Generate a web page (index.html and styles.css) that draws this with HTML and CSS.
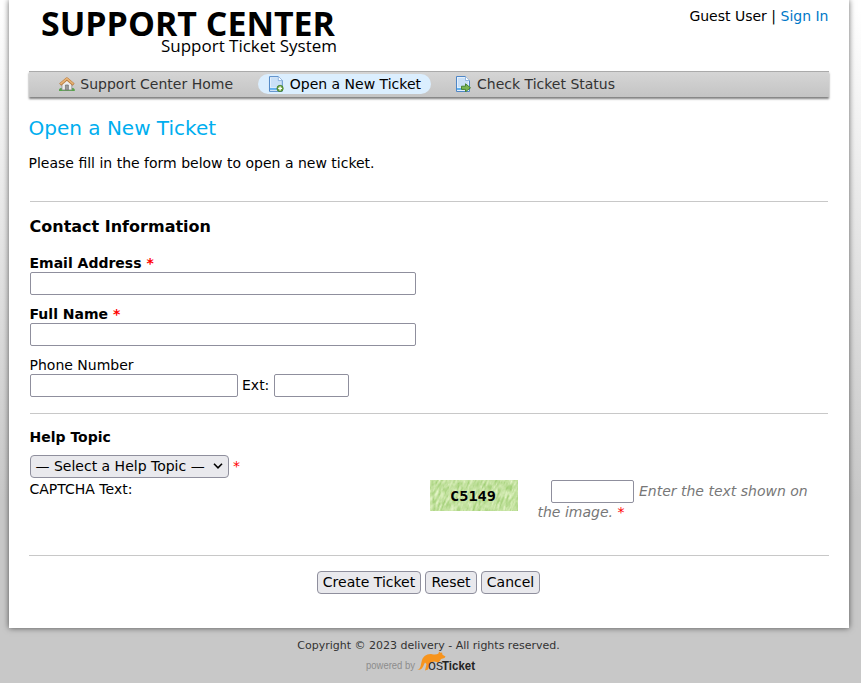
FILE: index.html
```html
<!DOCTYPE html>
<html lang="en">
<head>
<meta charset="utf-8">
<title>Support Center</title>
<link rel="stylesheet" href="styles.css">
</head>
<body>
<div class="container">
  <header class="header">
    <svg class="logo" width="300" height="60" viewBox="0 0 300 60" role="img" aria-label="Support Center">
      <text class="logo-title" x="0" y="35.500" textLength="294" lengthAdjust="spacingAndGlyphs">SUPPORT CENTER</text>
      <text class="logo-sub" x="120" y="52" textLength="176" lengthAdjust="spacingAndGlyphs">Support Ticket System</text>
    </svg>
    <p class="user">Guest User | <a href="#">Sign In</a></p>
  </header>
  <nav class="nav">
    <a class="nav-item home" href="#">
      <svg width="16" height="16" viewBox="0 0 16 16"><path d="M0 13.5 Q2 11 4 13 H12 Q14 11 16 13.5 V15 H0Z" fill="#58a44c"/><path d="M3 7.5 8 3 13 7.5V14H3Z" fill="#ececec" stroke="#8b8b8b" stroke-width=".8"/><path d="M6.5 14V9h3v5Z" fill="#9b9b9b" stroke="#6e6e6e" stroke-width=".7"/><path d="M1.2 8.7 8 2.7l6.8 6" fill="none" stroke="#b5773a" stroke-width="3" stroke-linejoin="round"/><path d="M1.5 8.2 8 2.5 14.5 8.2" fill="none" stroke="#e7b376" stroke-width="1.7"/></svg>
      <span>Support Center Home</span></a>
    <a class="nav-item new active" href="#">
      <svg width="16" height="16" viewBox="0 0 16 16"><path d="M1.5.5h9l4 4v11h-13Z" fill="#e4f0fc" stroke="#4f86c6"/><path d="M3 2h7l3 3v6H3Z" fill="#c9e0f7"/><path d="M10.5.5v4h4" fill="#fff" stroke="#7ba8db" stroke-width=".8"/><path d="M2 13h8" stroke="#62b1ee" stroke-width="2"/><circle cx="12.300" cy="12.500" r="3.200" fill="#6da544" stroke="#3f7c26" stroke-width=".8"/><path d="M12.300 10.500v4M10.300 12.500h4" stroke="#fff" stroke-width="1.400"/></svg>
      <span>Open a New Ticket</span></a>
    <a class="nav-item status" href="#">
      <svg width="16" height="16" viewBox="0 0 16 16"><path d="M1.5.5h9l4 4v11h-13Z" fill="#e4f0fc" stroke="#4f86c6"/><path d="M3 2h7l3 3v6H3Z" fill="#c9e0f7"/><path d="M10.5.5v4h4" fill="#fff" stroke="#7ba8db" stroke-width=".8"/><path d="M2 13h7" stroke="#62b1ee" stroke-width="2"/><path d="M6.5 10.2h4V7.8l5 4-5 4v-2.4h-4Z" fill="#79b552" stroke="#3f7c26" stroke-width=".9"/></svg>
      <span>Check Ticket Status</span></a>
  </nav>
  <main class="content">
    <h1>Open a New Ticket</h1>
    <p class="intro">Please fill in the form below to open a new ticket.</p>
    <form>
      <section class="contact">
        <h3>Contact Information</h3>
        <div class="field"><label class="required" for="email">Email Address <span class="error">*</span></label><input id="email" class="wide" type="text"></div>
        <div class="field"><label class="required" for="name">Full Name <span class="error">*</span></label><input id="name" class="wide" type="text"></div>
        <div class="field"><label for="phone">Phone Number</label>
          <div class="phone-row"><input id="phone" class="phone" type="text"><span class="ext-label">Ext:</span><input class="ext" type="text" aria-label="Extension"></div>
        </div>
      </section>
      <section class="topic">
        <h4>Help Topic</h4>
        <div class="topic-row">
          <div class="select"><span>— Select a Help Topic —</span><svg width="10" height="6" viewBox="0 0 10 6"><path d="M1 .8l4 4 4-4" fill="none" stroke="#000" stroke-width="1.6"/></svg></div>
          <span class="error">*</span>
        </div>
        <div class="captcha-row">
          <span class="captcha-label">CAPTCHA Text:</span>
          <svg class="captcha" width="88" height="31" viewBox="0 0 88 31">
            <defs><filter id="grass" x="0" y="0" width="100%" height="100%" color-interpolation-filters="sRGB"><feTurbulence type="fractalNoise" baseFrequency=".5 .13" numOctaves="3" seed="4"/><feColorMatrix values=".45 0 0 0 .54  .25 0 0 0 .76  .55 0 0 0 .35  0 0 0 0 1"/></filter></defs>
            <rect width="88" height="31" fill="#c0de9b"/>
            <g transform="rotate(20 44 15)"><rect x="-15" y="-25" width="120" height="80" filter="url(#grass)"/></g>
            <text class="captcha-code" x="20" y="20.500" textLength="46" lengthAdjust="spacingAndGlyphs">C5149</text>
          </svg>
          <div class="captcha-entry"><input class="code" type="text" aria-label="CAPTCHA Text"> <em>Enter the text shown on the image.</em> <span class="error">*</span></div>
        </div>
      </section>
      <div class="buttons"><button type="submit" class="create">Create Ticket</button><button type="reset" class="reset">Reset</button><button type="button" class="cancel">Cancel</button></div>
    </form>
  </main>
</div>
<footer class="footer">
  <p>Copyright © 2023 delivery - All rights reserved.</p>
  <svg class="powered" width="120" height="22" viewBox="0 0 120 22" role="img" aria-label="powered by osTicket">
    <text class="powered-by" x="1" y="17.500" textLength="49" lengthAdjust="spacingAndGlyphs">powered by</text>
    <path d="M52 19C55.500 18.500 55.500 15 56.500 11C57.500 5.500 62 2.500 67 3.200C70 3.600 72 3.500 73.500 2.500L74 .5l2 1.500 1-.8.5 2.500 3 1.800-1 1.500-3.500 1C75 10.500 74 11.500 71.500 11L69 10.500C66 11 65.500 13 63.500 15.500L63 18.500 60 19.500 61.500 13 60 11.500C58 14.500 58 19.500 52 19Z" fill="#f7941d"/>
    <text class="brand-os" x="63" y="19" textLength="15" lengthAdjust="spacingAndGlyphs">os</text>
    <text class="brand-ticket" x="77" y="19" textLength="33" lengthAdjust="spacingAndGlyphs">Ticket</text>
  </svg>
</footer>
</body>
</html>
```
FILE: styles.css
```css
* { box-sizing: border-box; }
body {
  margin: 0;
  min-height: 683px;
  background: #c8c8c8 linear-gradient(#fff 0, #fff 10px, #c8c8c8 500px) no-repeat;
  font: 14px/20px "DejaVu Sans", sans-serif;
  color: #000;
  overflow: hidden;
}
h1, h3, h4, p { margin: 0; }
a { color: #0072bc; text-decoration: none; }
.container {
  width: 840px;
  height: 628px;
  margin-left: 9px;
  padding: 0 20px;
  background: #fff;
  box-shadow: 0 0 6px rgba(0, 0, 0, .6);
}
.header {
  display: flex;
  justify-content: space-between;
  height: 71px;
  padding-left: 12px;
}
.logo { display: block; overflow: visible; }
.logo-title { font: bold 33.5px "Open Sans", sans-serif; }
.logo-sub { font: 16px "Open Sans", sans-serif; }
.user { padding: 6px .5px 0 0; }
.user a { color: #0078c8; }
.nav {
  display: flex;
  align-items: flex-start;
  height: 26px;
  padding: 2px 0 0 20px;
  border-top: 1px solid #aaa;
  background: linear-gradient(#d5d5d5, #c4c4c4);
  box-shadow: 0 2px 2px rgba(0, 0, 0, .5);
}
.nav-item {
  display: flex;
  align-items: center;
  gap: 5.5px;
  height: 20px;
  padding: 0 10px;
  border-radius: 10px;
  color: #333;
  white-space: nowrap;
}
.home { width: 194px; margin-right: 15px; }
.new { width: 173px; margin-right: 14px; }
.new, .status { gap: 6px; }
.active { background: #dbeefe; color: #000; }
.content { padding-top: 19px; }
h1 {
  margin-left: -.5px;
  font-size: 20px;
  font-weight: normal;
  line-height: 24px;
  color: #00aeef;
}
.intro { margin: 13px 0 0 -.5px; }
.contact {
  height: 212px;
  margin: 28px 1px 0;
  padding-top: 14px;
  border-top: 1px solid #c8c8c8;
}
h3 { font-size: 16px; line-height: 22px; margin: 0 0 16px -.5px; }
.field { height: 51px; }
label { display: block; height: 18px; margin-left: -.5px; line-height: 18px; }
.required { font-weight: bold; }
.error { color: #f00; font-weight: normal; }
input {
  display: block;
  height: 23px;
  padding: 1px 2px;
  border: 1px solid #8f8f9d;
  border-radius: 2px;
  background: #fff;
  font: inherit;
}
.required .error { font-weight: bold; }
.wide { width: 386px; }
.phone-row { display: flex; align-items: flex-start; }
.phone { width: 208px; }
.ext-label { width: 36px; padding: 1px 0 0 4px; }
.ext { width: 75px; }
.topic {
  height: 142px;
  margin: 0 1px;
  padding-top: 13px;
  border-top: 1px solid #c8c8c8;
}
h4 { margin-left: -.5px; font-size: 14px; line-height: 20px; }
.topic-row { display: flex; align-items: flex-start; gap: 4px; height: 23px; margin-top: 8px; }
.topic-row .error { padding-top: 1px; }
.select {
  display: flex;
  align-items: center;
  justify-content: space-between;
  width: 199px;
  height: 23px;
  padding: 0 5px 1px 4.5px;
  border: 1px solid #8f8f9d;
  border-radius: 4px;
  background: #e9e9ed;
  white-space: nowrap;
}
.captcha-row { display: flex; align-items: flex-start; padding-top: 1px; }
.captcha-label { width: 400px; text-indent: -.5px; }
.captcha { margin: 1px 20px 0 0; }
.captcha-code { font: bold 13.5px "DejaVu Sans Mono", monospace; }
.captcha-entry { width: 285px; margin-left: -.5px; padding-top: 1px; line-height: 20px; }
.captcha-entry em { color: #777; }
.code { display: inline-block; width: 83px; height: 23px; margin: 0 .5px -2px 13.5px; vertical-align: top; }
.captcha-entry em { position: relative; top: 1px; }
.captcha-entry .error { position: relative; top: 1px; }
.buttons {
  display: flex;
  justify-content: center;
  gap: 4px;
  padding-top: 15px;
  padding-right: 1px;
  border-top: 1px solid #c8c8c8;
}
button {
  height: 23px;
  padding: 0 0 2px;
  border: 1px solid #8f8f9d;
  border-radius: 4px;
  background: #e9e9ed;
  color: #000;
  font: inherit;
}
.create { width: 104px; }
.reset { width: 52px; }
.cancel { width: 59px; }
.footer {
  width: 857px;
  padding-top: 10px;
  text-align: center;
  font-size: 11px;
  line-height: 16px;
  color: #333;
}
.powered { display: block; margin: -3px 0 0 365px; }
.powered-by { font: 10.5px "Liberation Sans", sans-serif; fill: #8c8c8c; }
.brand-os { font: 14.5px "Liberation Sans", sans-serif; fill: #333; }
.brand-ticket { font: bold 13.5px "Liberation Sans", sans-serif; fill: #222; }
```
